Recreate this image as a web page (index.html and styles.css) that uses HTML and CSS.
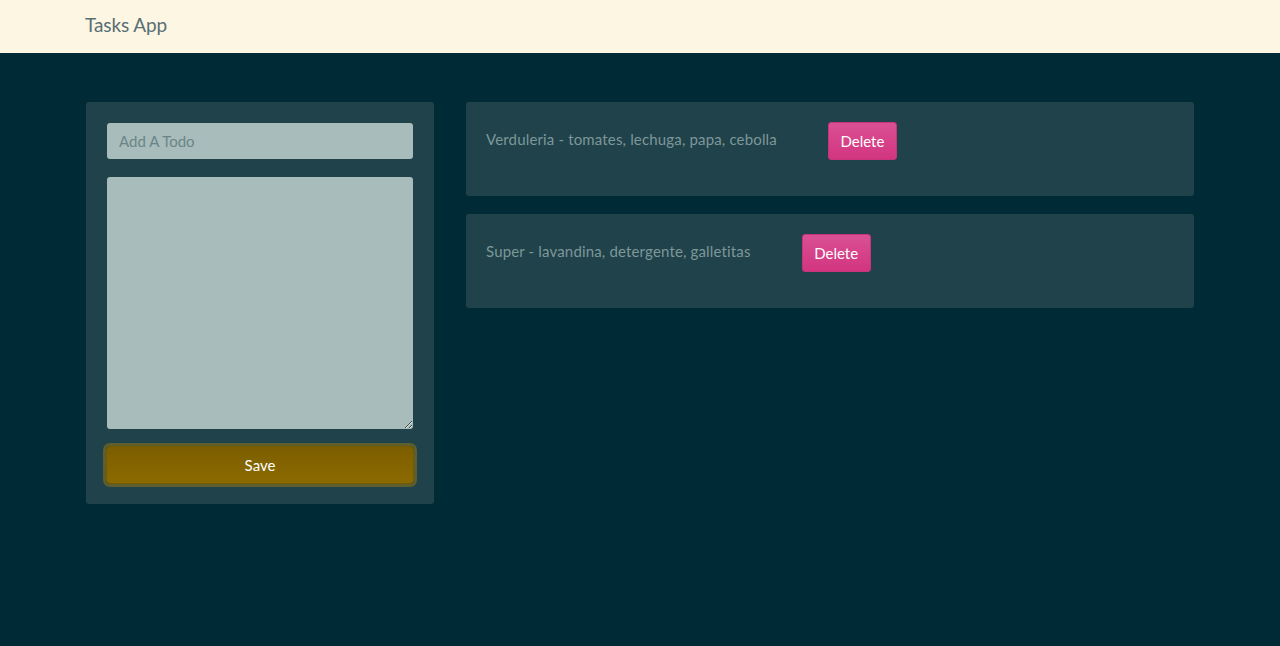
FILE: index.html
```html
<!DOCTYPE html>
<html>
<head>
<meta charset="utf-8">
<title>Tasks App</title>
<link rel="stylesheet" href="styles.css">
</head>
<body>
<nav class="navbar">
  <div class="brand">Tasks App</div>
</nav>
<main class="container">
  <section class="form-card">
    <input class="field" type="text" placeholder="Add A Todo">
    <textarea class="field area"></textarea>
    <button class="save">Save</button>
  </section>
  <section class="list">
    <div class="task">
      <span class="task-text">Verduleria - tomates, lechuga, papa, cebolla</span>
      <button class="delete">Delete</button>
    </div>
    <div class="task">
      <span class="task-text">Super - lavandina, detergente, galletitas</span>
      <button class="delete">Delete</button>
    </div>
  </section>
</main>
</body>
</html>
```

FILE: styles.css
```css
* { box-sizing: border-box; }
html, body { margin: 0; padding: 0; }
body {
  background: #002b36;
  font-family: "Source Sans Pro", Lato, "Liberation Sans", sans-serif;
  font-size: 15px;
  height: 646px;
  overflow: hidden;
}
.navbar {
  background: #fdf6e3;
  height: 53px;
  display: flex;
  align-items: center;
  padding-left: 85px;
}
.brand {
  color: #586e75;
  font-size: 19px;
  letter-spacing: -0.1px;
  font-family: "Source Sans Pro", Lato, sans-serif;
  margin-top: -5px;
}
.container {
  display: flex;
  align-items: flex-start;
  gap: 32px;
  padding: 49px 86px 0 86px;
}
.form-card {
  width: 348px;
  flex: none;
  background: #1f424b;
  border-radius: 3px;
  padding: 21px 21px 20px 21px;
  display: flex;
  flex-direction: column;
}
.field {
  width: 306px;
  height: 36px;
  background: #a7bcbb;
  border: 0;
  border-radius: 3px;
  font-family: inherit;
  font-size: 15px;
  padding: 0 12px;
  color: #2d4a52;
  outline: none;
}
.field::placeholder { color: #6b8586; }
.area {
  height: 252px;
  margin-top: 18px;
  padding: 8px 12px;
  resize: vertical;
}
.save {
  margin-top: 17px;
  height: 38px;
  width: 308px;
  margin-left: -1px;
  border: 1px solid #745a05;
  border-radius: 4px;
  background: linear-gradient(#7b5e00, #8b6a00);
  box-shadow: 0 0 0 3px #5e5f2c;
  color: #fff;
  font-family: inherit;
  font-size: 15px;
  cursor: pointer;
}
.list {
  flex: 1;
  display: flex;
  flex-direction: column;
  gap: 18px;
}
.task {
  background: #1f424b;
  border-radius: 3px;
  height: 94px;
  padding: 20px 20px 0 20px;
  display: flex;
  align-items: flex-start;
}
.task-text {
  color: #7e9798;
  margin-top: 8px;
  line-height: 19px;
  letter-spacing: 0.16px;
}
.delete {
  margin-left: 51px;
  width: 69px;
  height: 38px;
  border: 1px solid #c8347c;
  border-radius: 3px;
  background: linear-gradient(#da5093, #d23580);
  color: #fff;
  font-family: inherit;
  font-size: 15px;
  padding: 0;
  cursor: pointer;
}
```
